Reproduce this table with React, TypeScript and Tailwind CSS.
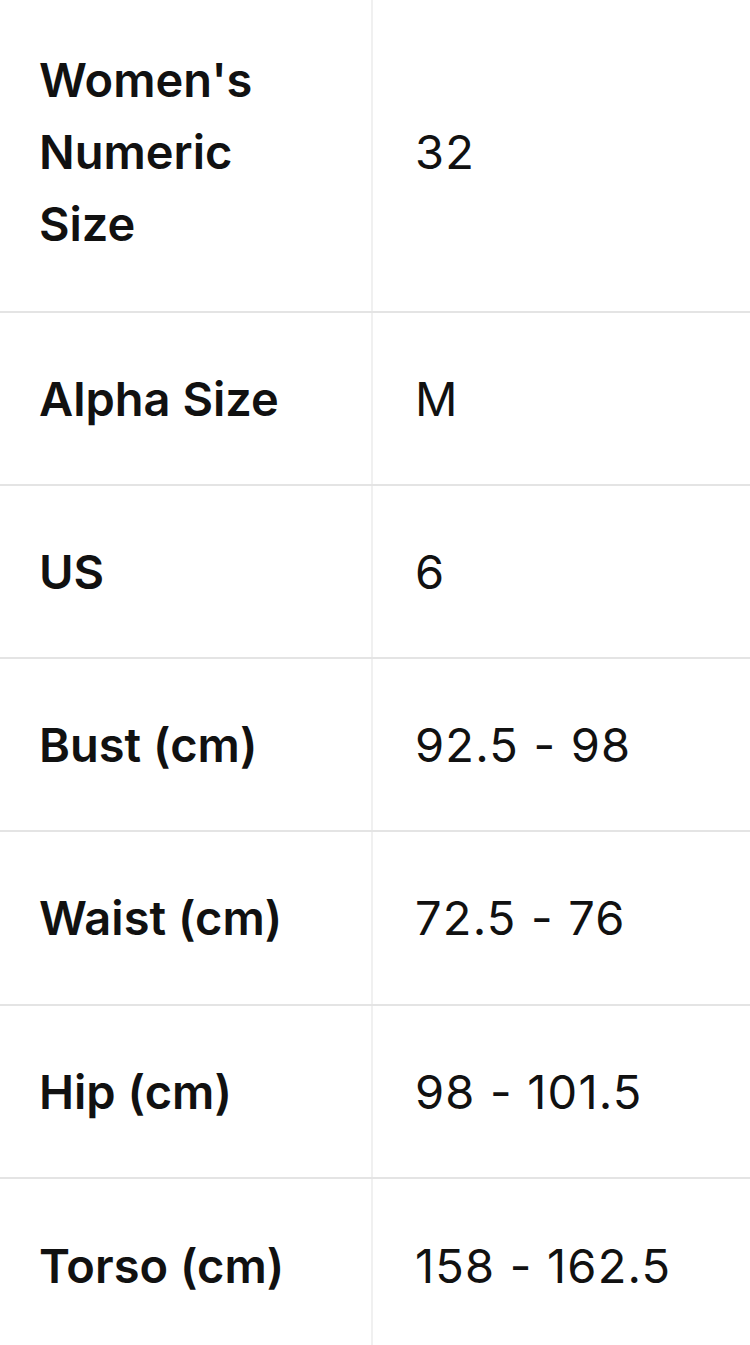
import React from "react";

const rows: { label: string[]; value: string; h: string; pb: string }[] = [
  { label: ["Women's", "Numeric", "Size"], value: "32", h: "h-[313px]", pb: "pb-[7px]" },
  { label: ["Alpha Size"], value: "M", h: "h-[173px]", pb: "" },
  { label: ["US"], value: "6", h: "h-[173px]", pb: "" },
  { label: ["Bust (cm)"], value: "92.5 - 98", h: "h-[173px]", pb: "" },
  { label: ["Waist (cm)"], value: "72.5 - 76", h: "h-[174px]", pb: "" },
  { label: ["Hip (cm)"], value: "98 - 101.5", h: "h-[173px]", pb: "" },
  { label: ["Torso (cm)"], value: "158 - 162.5", h: "h-[173px]", pb: "" },
];

export default function App() {
  return (
    <div
      className="w-[750px] h-[1345px] overflow-hidden bg-white text-[#111111]"
      style={{ fontFamily: 'Inter, "Liberation Sans", Arial, sans-serif' }}
    >
      {rows.map((r, i) => (
        <div
          key={i}
          className={`flex ${r.h} ${i < rows.length - 1 ? "border-b-2 border-[#e4e4e4]" : ""}`}
        >
          <div className={`w-[373px] shrink-0 border-r-2 border-[#f0f0f0] flex items-center pl-[39px] ${r.pb}`}>
            <div className="text-[47px] leading-[72px] font-semibold">
              {r.label.map((l, j) => (
                <div key={j}>{l}</div>
              ))}
            </div>
          </div>
          <div className={`flex-1 flex items-center pl-[42px] ${r.pb}`}>
            <div className="text-[47px] leading-[72px] tracking-[1.2px]">{r.value}</div>
          </div>
        </div>
      ))}
    </div>
  );
}
